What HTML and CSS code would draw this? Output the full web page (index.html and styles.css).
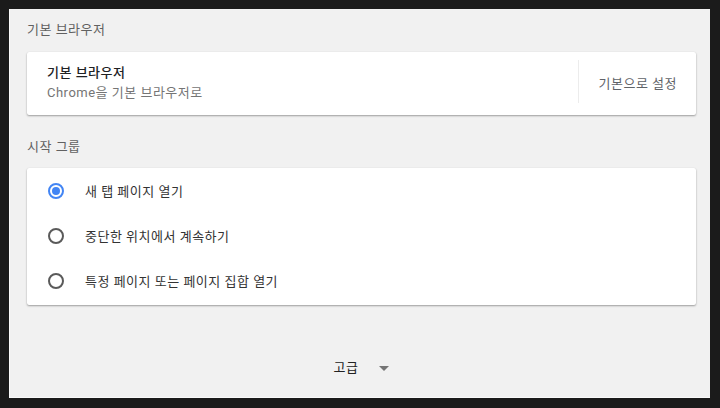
FILE: index.html
```html
<!DOCTYPE html>
<html lang="ko">
<head>
  <meta charset="UTF-8" />
  <title>설정</title>
  <link rel="stylesheet" href="styles.css">
</head>
<body>
  <div class="frame">
    <div class="page">
      <div class="section-title first">기본 브라우저</div>
      <div class="card default-card">
        <div class="default-text">
          <div class="default-name">기본 브라우저</div>
          <div class="default-sub">Chrome을 기본 브라우저로</div>
        </div>
        <div class="divider"></div>
        <div class="make-default">기본으로 설정</div>
      </div>

      <div class="section-title">시작 그룹</div>
      <div class="card startup-card">
        <label class="radio-row">
          <span class="radio checked"></span>
          <span class="radio-label">새 탭 페이지 열기</span>
        </label>
        <label class="radio-row">
          <span class="radio"></span>
          <span class="radio-label">중단한 위치에서 계속하기</span>
        </label>
        <label class="radio-row">
          <span class="radio"></span>
          <span class="radio-label">특정 페이지 또는 페이지 집합 열기</span>
        </label>
      </div>

      <div class="advanced">
        <span class="advanced-label">고급</span>
        <span class="arrow"></span>
      </div>
    </div>
  </div>
</body>
</html>
```

FILE: styles.css
```css
html, body {
  margin: 0;
  padding: 0;
  width: 100%;
  height: 100%;
  overflow: hidden;
  background: #1b1b1b;
  font-family: Roboto, "Noto Sans CJK KR", sans-serif;
  font-size: 13px;
  letter-spacing: 0.5px;
}
.frame {
  box-sizing: border-box;
  height: 100%;
  padding: 9px 10px 10px 9px;
}
.page {
  box-sizing: border-box;
  height: 100%;
  background: #f1f1f1;
  border-left: 1px solid #fafafa;
  border-bottom: 1px solid #fafafa;
  padding: 0 14px 0 17px;
}
.section-title {
  color: #616161;
  line-height: 20px;
  padding: 22px 0 11px 0;
}
.section-title.first {
  padding-top: 11px;
  padding-bottom: 12px;
}
.card {
  background: #fff;
  border-radius: 2px;
  box-shadow: 0 1px 2px rgba(0, 0, 0, 0.35), 0 0 1px rgba(0, 0, 0, 0.08);
}
.default-card {
  display: flex;
  align-items: center;
  height: 63px;
  padding: 0 19px 0 20px;
}
.default-text {
  flex: 1;
  line-height: 20px;
  padding-bottom: 2px;
}
.default-name {
  color: #202124;
  font-weight: 500;
}
.default-sub {
  color: #757575;
}
.divider {
  width: 1px;
  height: 43px;
  background: #ececec;
  margin-right: 20px;
  margin-bottom: 4px;
}
.make-default {
  color: #5f6368;
  margin-bottom: 2px;
}
.startup-card {
  padding: 0 0 2px 21px;
}
.radio-row {
  display: flex;
  align-items: center;
  height: 45px;
}
.radio {
  box-sizing: border-box;
  width: 16px;
  height: 16px;
  border: 2px solid #5a5a5a;
  border-radius: 50%;
  display: flex;
  align-items: center;
  justify-content: center;
  margin-right: 21px;
}
.radio.checked {
  border-color: #4285f4;
}
.radio.checked::after {
  content: "";
  width: 8px;
  height: 8px;
  border-radius: 50%;
  background: #4285f4;
}
.radio-label {
  color: #333;
}
.advanced {
  display: flex;
  justify-content: center;
  align-items: center;
  gap: 21px;
  margin-top: 53px;
  line-height: 20px;
  color: #222;
}
.arrow {
  width: 0;
  height: 0;
  border-left: 5px solid transparent;
  border-right: 5px solid transparent;
  border-top: 5px solid #757575;
  margin-top: 1px;
}
```
